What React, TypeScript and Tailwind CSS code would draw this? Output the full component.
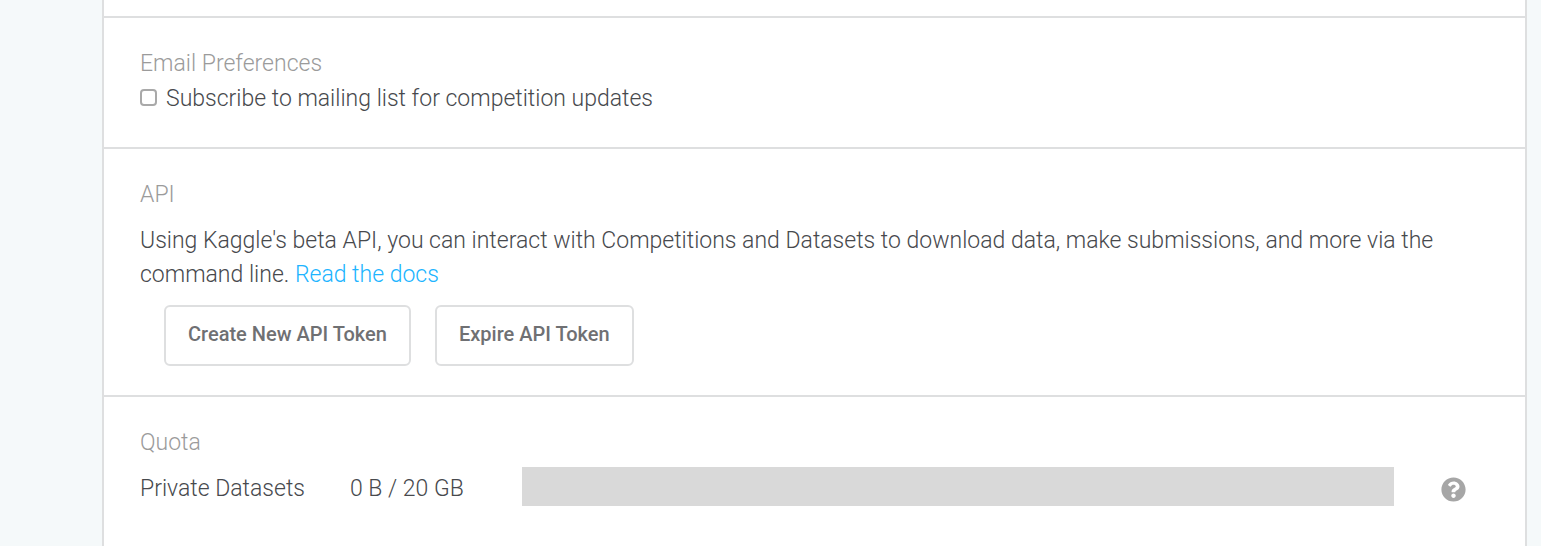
import type { ReactNode } from "react";
import { FaQuestionCircle } from "react-icons/fa";

interface SectionProps {
  title: string;
  children: ReactNode;
}

function Section({ title, children }: SectionProps) {
  return (
    <section className="border-t-2 border-[#dedfe0] px-9 pt-[29px]">
      <h2 className="text-[#9b9b9b]">{title}</h2>
      {children}
    </section>
  );
}

function TokenButton({ label }: { label: string }) {
  return (
    <button
      type="button"
      className="h-[61px] rounded-md border-2 border-[#dedfe0] px-[22px] pb-[3px] text-[20px] font-medium text-[#6f7073]"
    >
      {label}
    </button>
  );
}

export default function App() {
  return (
    <div className="min-h-screen bg-[#f5f9fa] pr-[14px] pl-[102px] font-['Roboto',sans-serif] text-[23px] leading-[34px] font-light text-[#47494d]">
      <main className="min-h-screen border-x-2 border-[#dedfe0] bg-white pt-4">
        <Section title="Email Preferences">
          <label className="flex items-center gap-[9px] pt-px pb-[31px]">
            <input
              type="checkbox"
              className="mb-[3px] size-[17px] appearance-none rounded-[4px] border-2 border-[#a9a9a9] bg-white"
            />
            Subscribe to mailing list for competition updates
          </label>
        </Section>

        <Section title="API">
          <p className="mt-3">
            Using Kaggle's beta API, you can interact with Competitions and Datasets to download
            data, make submissions, and more via the command line.{" "}
            <a href="#docs" className="text-[#20b4ff]">
              Read the docs
            </a>
          </p>
          <div className="flex gap-6 pt-[13px] pb-[29px] pl-6">
            <TokenButton label="Create New API Token" />
            <TokenButton label="Expire API Token" />
          </div>
        </Section>

        <Section title="Quota">
          <div className="flex items-center pt-[7px] pr-[23px]">
            <span className="w-[210px] pt-1">Private Datasets</span>
            <span className="w-[172px] pt-1">0 B / 20 GB</span>
            <div
              role="progressbar"
              aria-label="Private Datasets"
              aria-valuenow={0}
              aria-valuemax={20}
              className="h-[39px] flex-1 bg-[#d9d9d9]"
            />
            <button type="button" aria-label="Quota help" className="ml-[47px] pt-[5px]">
              <FaQuestionCircle size={25} color="#a6a6a6" />
            </button>
          </div>
        </Section>
      </main>
    </div>
  );
}
